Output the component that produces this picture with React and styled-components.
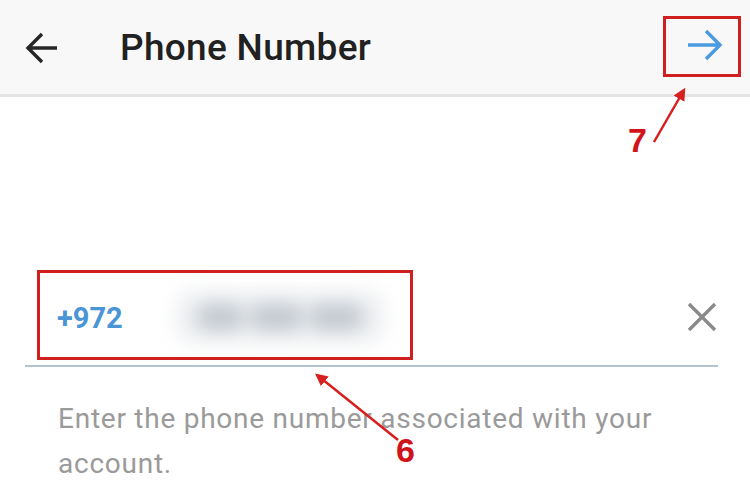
import React from 'react'
import styled, { createGlobalStyle } from 'styled-components'

const Global = createGlobalStyle`
    html, body {
        margin: 0;
        padding: 0;
        background: #ffffff;
        font-family: Roboto, 'Liberation Sans', sans-serif;
    }
`

const App = () => {
    return (
        <Page>
            <Global />
            <Header>
                <IconButton>
                    <svg width="36" height="36" viewBox="0 0 36 36">
                        <path d="M33 18H4M18 4L4 18l14 14" fill="none" stroke="#262626" strokeWidth="3.4" />
                    </svg>
                </IconButton>
                <Title>Phone Number</Title>
                <Spacer />
                <NextButton>
                    <svg width="38" height="36" viewBox="0 0 38 36">
                        <path d="M2 18h31M20 4l14 14-14 14" fill="none" stroke="#4a9be0" strokeWidth="3.4" />
                    </svg>
                </NextButton>
            </Header>

            <Body>
                <Field>
                    <Code>+972</Code>
                    <Blurred>
                        <Blob $w={50} />
                        <Blob $w={56} />
                        <Blob $w={58} />
                    </Blurred>
                    <Spacer />
                    <ClearIcon>
                        <svg width="32" height="32" viewBox="0 0 32 32">
                            <path d="M3 3l26 26M29 3L3 29" stroke="#8a8a8a" strokeWidth="3.4" />
                        </svg>
                    </ClearIcon>
                </Field>
                <Help>Enter the phone number associated with your account.</Help>
            </Body>

            <Marker style={{ left: 663, top: 16, width: 78, height: 61 }} />
            <Marker style={{ left: 37, top: 270, width: 376, height: 90 }} />
            <Annotations width="750" height="498">
                <defs>
                    <marker id="head" viewBox="0 0 10 10" refX="8" refY="5" markerWidth="5" markerHeight="5" orient="auto">
                        <path d="M0 0L10 5L0 10z" fill="#d81e1e" />
                    </marker>
                </defs>
                <line x1="654" y1="142" x2="684" y2="90" stroke="#d81e1e" strokeWidth="2.5" markerEnd="url(#head)" />
                <line x1="398" y1="440" x2="317" y2="375" stroke="#d81e1e" strokeWidth="2.5" markerEnd="url(#head)" />
            </Annotations>
            <Label style={{ left: 628, top: 121 }}>7</Label>
            <Label style={{ left: 396, top: 431 }}>6</Label>
        </Page>
    )
}

export default App

const Page = styled.div`
    position: relative;
    width: 750px;
    height: 498px;
    overflow: hidden;
    background: #ffffff;
`

const Header = styled.div`
    display: flex;
    align-items: center;
    height: 97px;
    padding: 0 26px 0 24px;
    box-sizing: border-box;
    background: #f8f8f8;
    border-bottom: 3px solid #e4e4e4;
`

const IconButton = styled.div`
    display: flex;
    width: 36px;
    height: 36px;
    margin-right: 60px;
    margin-top: 2px;
`

const Title = styled.div`
    font-size: 37px;
    font-weight: 500;
    color: #212121;
    letter-spacing: 0.3px;
`

const Spacer = styled.div`
    flex: 1;
`

const NextButton = styled.div`
    display: flex;
    margin-top: -4px;
`

const Body = styled.div`
    padding: 170px 32px 0 25px;
`

const Field = styled.div`
    display: flex;
    align-items: center;
    height: 98px;
    padding: 0 0 0 32px;
    border-bottom: 2px solid #b3c3d0;
`

const Code = styled.div`
    font-size: 29px;
    font-weight: 700;
    color: #4a95d6;
    width: 118px;
    margin-top: 4px;
`

const Blurred = styled.div`
    display: flex;
    align-items: center;
    gap: 6px;
    width: 210px;
    height: 54px;
    box-sizing: border-box;
    padding: 0 22px;
    background: #eef0f2;
    border-radius: 20px;
    filter: blur(9px);
    margin-top: 2px;
`

const Blob = styled.div`
    width: ${p => p.$w}px;
    height: 26px;
    background: #c3c9d0;
    border-radius: 12px;
`

const ClearIcon = styled.div`
    display: flex;
    margin-top: 2px;
`

const Help = styled.p`
    margin: 29px 0 0 33px;
    font-size: 28px;
    line-height: 45px;
    letter-spacing: 0.75px;
    color: #9a9a9a;
    max-width: 640px;
`

const Marker = styled.div`
    position: absolute;
    border: 3px solid #cf1f1f;
    box-sizing: border-box;
`

const Annotations = styled.svg`
    position: absolute;
    left: 0;
    top: 0;
    pointer-events: none;
`

const Label = styled.div`
    position: absolute;
    font-family: 'Liberation Sans', Arial, sans-serif;
    font-weight: 700;
    font-size: 34px;
    color: #d0141a;
`
